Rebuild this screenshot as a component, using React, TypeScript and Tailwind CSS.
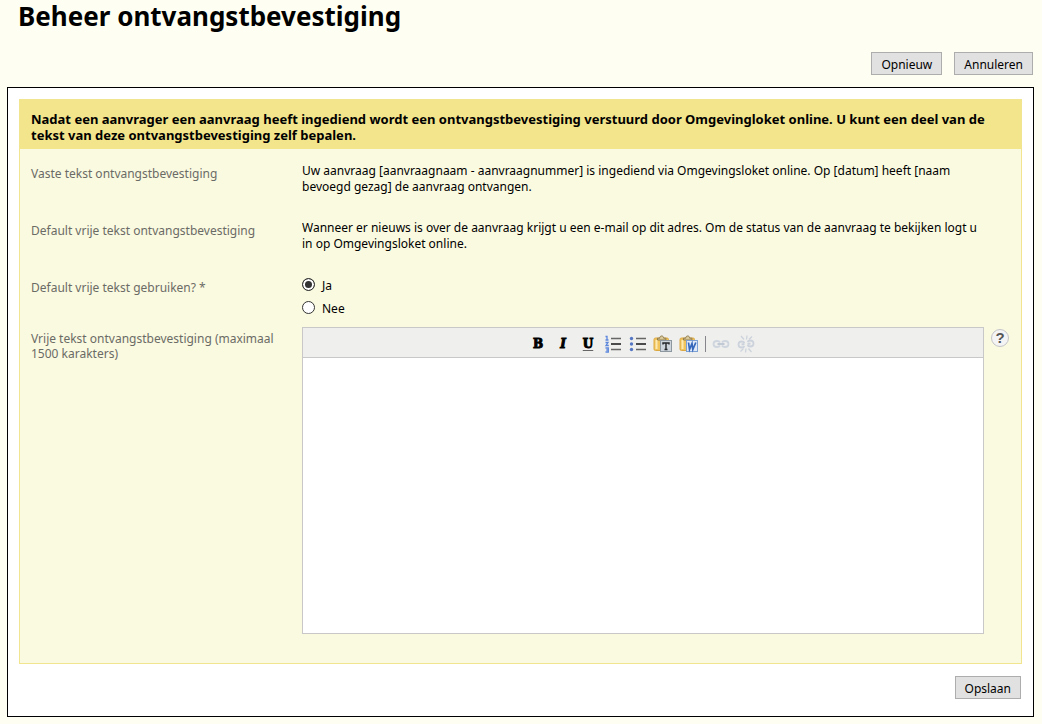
import { useState } from 'react';
import type { ReactNode } from 'react';

const BUTTON = 'h-[23px] border border-[#adadad] bg-[#e1e1e1] px-[9px] pt-0.5 text-[12px] leading-5 whitespace-nowrap text-black';
const LABEL = 'w-[271px] shrink-0 pr-3 text-[12px] leading-[15px] text-[#6b6b66]';

function NumberedListIcon() {
    return (
        <svg width="18" height="18" viewBox="0 0 18 18" fill="none">
            <path d="M7 3.5h10M7 14.5h10" stroke="#666" strokeWidth="1.6" />
            <path d="M7 9h10" stroke="#222" strokeWidth="1.6" />
            <path d="M1.500 1.500h1.500v3.500M1.500 5h3M1.500 7.500h2.500L2 10.500h2.800M1.500 13h2.800v4H1.500M2.300 15h2" stroke="#5c86dc" strokeWidth="1.3" />
        </svg>
    );
}

function BulletListIcon() {
    return (
        <svg width="18" height="18" viewBox="0 0 18 18" fill="none">
            <path d="M7 3.5h10M7 14.5h10" stroke="#666" strokeWidth="1.6" />
            <path d="M7 9h10" stroke="#222" strokeWidth="1.6" />
            <g fill="#5577c4">
                <circle cx="2.500" cy="3.5" r="1.7" />
                <circle cx="2.500" cy="9" r="1.7" />
                <circle cx="2.500" cy="14.5" r="1.7" />
            </g>
        </svg>
    );
}

function Clipboard({ children }: { children: ReactNode }) {
    return (
        <svg width="20" height="18" viewBox="0 0 20 18" fill="none">
            <rect x="1" y="3" width="14.500" height="12.5" rx="1.5" fill="#f2c45c" stroke="#dba944" />
            <path d="M3.500 5v9" stroke="#fdeab2" strokeWidth="2" />
            <path d="M4.500 5V3.200h2.200c0-3 4-3 4 0h2.200V5z" fill="#d9c99c" stroke="#8a7646" strokeWidth="0.900" />
            {children}
        </svg>
    );
}

function PasteTextIcon() {
    return (
        <Clipboard>
            <rect x="7.500" y="5.500" width="11" height="11" fill="#cdd4dc" stroke="#8d979f" />
            <path d="M10 9.500V8h6v1.500M13 8v6.500M11.500 14.500h3" stroke="#222529" strokeWidth="1.400" />
        </Clipboard>
    );
}

function PasteWordIcon() {
    return (
        <Clipboard>
            <rect x="7.500" y="5.500" width="11" height="11" fill="#dfe9f8" stroke="#7ca0d4" />
            <path d="M9.500 7.500l1 7 2.500-6 .8 6 3-7" stroke="#3568ba" strokeWidth="1.700" />
        </Clipboard>
    );
}

function LinkIcon() {
    return (
        <svg width="18" height="18" viewBox="0 0 18 18" fill="none" stroke="#cfd5de" strokeWidth="1.800">
            <path d="M8 7.500C7.500 6.500 6.500 6 5 6 2.800 6 1.500 7 1.500 9s1.300 3 3.500 3c1.500 0 2.500-.5 3-1.500M10 7.500c.5-1 1.500-1.500 3-1.500 2.200 0 3.500 1 3.500 3s-1.300 3-3.500 3c-1.500 0-2.500-.5-3-1.500" />
            <path d="M5.500 9h7" stroke="#bcc5d1" />
        </svg>
    );
}

function UnlinkIcon() {
    return (
        <svg width="18" height="18" viewBox="0 0 18 18" fill="none" stroke="#cdd3dc" strokeWidth="1.800">
            <path d="M7.500 8C7 7 6 6.500 4.700 6.500 2.800 6.500 1.500 7.500 1.500 9.500s1.300 3 3.200 3c1.300 0 2.300-.5 2.800-1.500M10.500 7c.5-1 1.500-1.500 2.800-1.500 1.900 0 3.200 1 3.200 3s-1.300 3-3.200 3c-1.300 0-2.300-.5-2.800-1.500" />
            <path d="M4.500 9.500L7.500 9M10.500 9l3-.5" />
            <path d="M4 1l3 3.500M10 .5L9.500 4.500M15 1.500l-3 3M3.500 16.500l3-3M8.500 17.500l.5-4M14.500 17l-3-3.500" strokeWidth="1.300" />
        </svg>
    );
}

function ToolButton({ title, disabled, className = '', children }: { title: string; disabled?: boolean; className?: string; children: ReactNode }) {
    return (
        <button type="button" title={title} aria-label={title} disabled={disabled} className={`flex h-5 items-center justify-center ${className}`}>
            {children}
        </button>
    );
}

function Toolbar() {
    return (
        <div className="flex h-[30px] items-center justify-center border-b border-[#c8c8c8] bg-[#efefee] pt-0.5 pr-0.5 font-['DejaVu_Serif',serif] text-[12px] font-bold text-black [-webkit-text-stroke:1px_black]">
            <ToolButton title="Vet" className="w-[25px]">B</ToolButton>
            <ToolButton title="Cursief" className="w-[25px] italic">I</ToolButton>
            <ToolButton title="Onderstrepen" className="w-[25px] underline decoration-[#666] underline-offset-2">U</ToolButton>
            <ToolButton title="Genummerde lijst" className="w-[25px]"><NumberedListIcon /></ToolButton>
            <ToolButton title="Opsomming" className="w-[25px]"><BulletListIcon /></ToolButton>
            <ToolButton title="Plakken als tekst" className="w-[25px]"><PasteTextIcon /></ToolButton>
            <ToolButton title="Plakken uit Word" className="w-[26px]"><PasteWordIcon /></ToolButton>
            <div className="mx-[3px] h-4 w-px bg-[#85858c]" />
            <ToolButton title="Link invoegen" disabled className="w-[25px]"><LinkIcon /></ToolButton>
            <ToolButton title="Link verwijderen" disabled className="w-[25px]"><UnlinkIcon /></ToolButton>
        </div>
    );
}

function TextRow({ label, children }: { label: string; children: ReactNode }) {
    return (
        <div className="flex min-h-[57px]">
            <div className={`${LABEL} pt-[3px]`}>{label}</div>
            <p className="h-[31px] flex-1 overflow-hidden pr-6 text-[12px] leading-4 text-black">{children}</p>
        </div>
    );
}

export default function App() {
    const [useDefault, setUseDefault] = useState('ja');
    const [text, setText] = useState('');

    return (
        <div className="min-h-screen bg-[#fefef2] pr-2 pb-[7px] pl-[7px] font-['Noto_Sans','DejaVu_Sans',sans-serif] text-black">
            <h1 className="pl-[11px] text-[26px] leading-8 font-bold">Beheer ontvangstbevestiging</h1>

            <div className="mt-5 mb-3 flex justify-end gap-3 pr-px">
                <button type="button" className={BUTTON}>Opnieuw</button>
                <button type="button" className={BUTTON}>Annuleren</button>
            </div>

            <form className="border border-black bg-white px-[11px] pt-[11px] pb-[17px]" onSubmit={(e) => e.preventDefault()}>
                <div className="border border-[#f1e58f] bg-[#fafae0]">
                    <p className="bg-[#f3e58c] px-[11px] pt-[11px] pb-1.5 text-[13px] leading-4 font-bold">
                        Nadat een aanvrager een aanvraag heeft ingediend wordt een ontvangstbevestiging verstuurd door Omgevingloket online. U kunt een deel van de tekst van deze ontvangstbevestiging zelf bepalen.
                    </p>

                    <div className="pt-[14px] pr-3 pb-[29px] pl-[11px]">
                        <TextRow label="Vaste tekst ontvangstbevestiging">
                            Uw aanvraag [aanvraagnaam - aanvraagnummer] is ingediend via Omgevingsloket online. Op [datum] heeft [naam bevoegd gezag] de aanvraag ontvangen.
                        </TextRow>
                        <TextRow label="Default vrije tekst ontvangstbevestiging">
                            Wanneer er nieuws is over de aanvraag krijgt u een e-mail op dit adres. Om de status van de aanvraag te bekijken logt u in op Omgevingsloket online.
                        </TextRow>

                        <fieldset className="flex h-[50px]">
                            <legend className={`${LABEL} float-left pt-[3px]`}>Default vrije tekst gebruiken? *</legend>
                            <div className="flex flex-col gap-[5px] text-[12px] leading-[18px]">
                                {[['ja', 'Ja'], ['nee', 'Nee']].map(([value, name]) => (
                                    <label key={value} className="flex items-start gap-[7px]">
                                        <input
                                            type="radio"
                                            name="default"
                                            value={value}
                                            checked={useDefault === value}
                                            onChange={() => setUseDefault(value)}
                                            className="mt-px h-[13px] w-[13px] appearance-none rounded-full border border-[#333] bg-white checked:bg-[#333] checked:shadow-[inset_0_0_0_2px_white]"
                                        />
                                        {name}
                                    </label>
                                ))}
                            </div>
                        </fieldset>

                        <div className="flex items-start">
                            <label htmlFor="vrije-tekst" className={`${LABEL} pt-1`}>
                                Vrije tekst ontvangstbevestiging (maximaal 1500 karakters)
                            </label>
                            <div className="flex-1 border border-[#c8c8c8] bg-white">
                                <Toolbar />
                                <textarea
                                    id="vrije-tekst"
                                    value={text}
                                    maxLength={1500}
                                    onChange={(e) => setText(e.target.value)}
                                    className="block h-[275px] w-full resize-none p-2 text-[12px] outline-none"
                                />
                            </div>
                            <button type="button" aria-label="Help" className="mt-0.5 ml-[7px] flex h-[18px] w-[18px] items-center justify-center rounded-full border border-[#c4c4c8] bg-[#f4f4f4] font-['Liberation_Sans',sans-serif] text-[15px] leading-4 font-bold text-[#555]">
                                ?
                            </button>
                        </div>
                    </div>
                </div>

                <div className="mt-3 flex justify-end pr-px">
                    <button type="submit" className={BUTTON}>Opslaan</button>
                </div>
            </form>
        </div>
    );
}
